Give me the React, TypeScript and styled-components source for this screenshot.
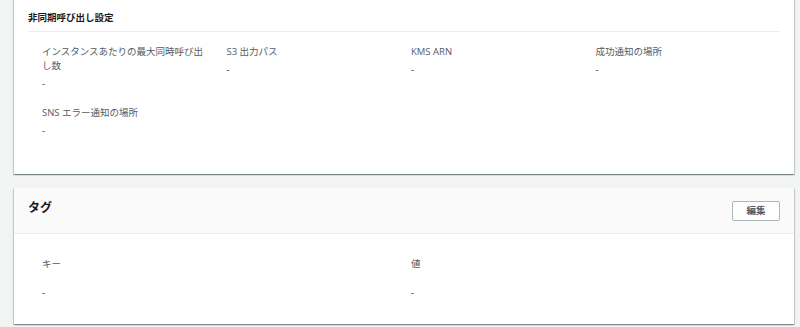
import React from "react";
import styled, { createGlobalStyle } from "styled-components";

const Global = createGlobalStyle`
  html, body { margin: 0; padding: 0; background: #f2f3f3; }
  body {
    font-family: "Open Sans", "Noto Sans CJK JP", sans-serif;
    color: #16191f;
    -webkit-font-smoothing: antialiased;
  }
`;

const Page = styled.div`
  display: flex;
  flex-direction: column;
  gap: 14px;
  padding: 0 6px 0 14px;
  height: 327px;
  box-sizing: border-box;
  overflow: hidden;
`;

const Card = styled.section<{ $cutTop?: boolean }>`
  background: #fff;
  margin-top: ${(p) => (p.$cutTop ? "-6px" : "0")};
  box-shadow: 0 1px 1px 0 rgba(0, 28, 36, 0.3),
    1px 1px 1px 0 rgba(0, 28, 36, 0.15),
    -1px 1px 1px 0 rgba(0, 28, 36, 0.15);
`;

const SubSection = styled.div`
  padding: 17px 14px 36px;
`;

const SubHeading = styled.h3`
  margin: 0 0 13px;
  font-size: 9.5px;
  line-height: 14px;
  font-weight: 700;
  color: #16191f;
  padding-bottom: 6px;
  border-bottom: 1px solid #eaeded;
`;

const Grid = styled.div<{ $cols: number; $rowGap: number }>`
  display: grid;
  grid-template-columns: repeat(${(p) => p.$cols}, 1fr);
  row-gap: ${(p) => p.$rowGap}px;
  padding: 0 0 0 14px;
`;

const Field = styled.div<{ $gap: number }>`
  display: flex;
  flex-direction: column;
  gap: ${(p) => p.$gap}px;
  padding-right: 14px;
`;

const Label = styled.div`
  font-size: 9.5px;
  line-height: 14px;
  color: #545b64;
`;

const Value = styled.div`
  font-size: 9.5px;
  line-height: 14px;
  color: #16191f;
`;

const Header = styled.div`
  height: 46px;
  box-sizing: border-box;
  background: #fafafa;
  border-bottom: 1px solid #eaeded;
  display: flex;
  justify-content: space-between;
  align-items: flex-start;
  padding: 12px 14px 0;
`;

const Title = styled.h2`
  margin: 0;
  font-size: 12px;
  line-height: 16px;
  font-weight: 700;
  color: #16191f;
`;

const Button = styled.button`
  margin-top: 1px;
  width: 48px;
  height: 20px;
  box-sizing: border-box;
  background: #fff;
  border: 1px solid #aab7b8;
  border-radius: 2px;
  font-family: inherit;
  font-size: 9.5px;
  font-weight: 700;
  color: #545b64;
  padding: 0;
  line-height: 18px;
`;

const Body = styled.div`
  padding: 23px 14px 24px;
`;

const asyncFields = [
  "インスタンスあたりの最大同時呼び出し数",
  "S3 出力パス",
  "KMS ARN",
  "成功通知の場所",
  "SNS エラー通知の場所",
];

export default function App() {
  return (
    <>
      <Global />
      <Page>
        <Card $cutTop>
          <SubSection>
            <SubHeading>非同期呼び出し設定</SubHeading>
            <Grid $cols={4} $rowGap={15}>
              {asyncFields.map((f) => (
                <Field key={f} $gap={4}>
                  <Label>{f}</Label>
                  <Value>-</Value>
                </Field>
              ))}
            </Grid>
          </SubSection>
        </Card>
        <Card>
          <Header>
            <Title>タグ</Title>
            <Button>編集</Button>
          </Header>
          <Body>
            <Grid $cols={2} $rowGap={0}>
              <Field $gap={15}>
                <Label>キー</Label>
                <Value>-</Value>
              </Field>
              <Field $gap={15}>
                <Label>値</Label>
                <Value>-</Value>
              </Field>
            </Grid>
          </Body>
        </Card>
      </Page>
    </>
  );
}
